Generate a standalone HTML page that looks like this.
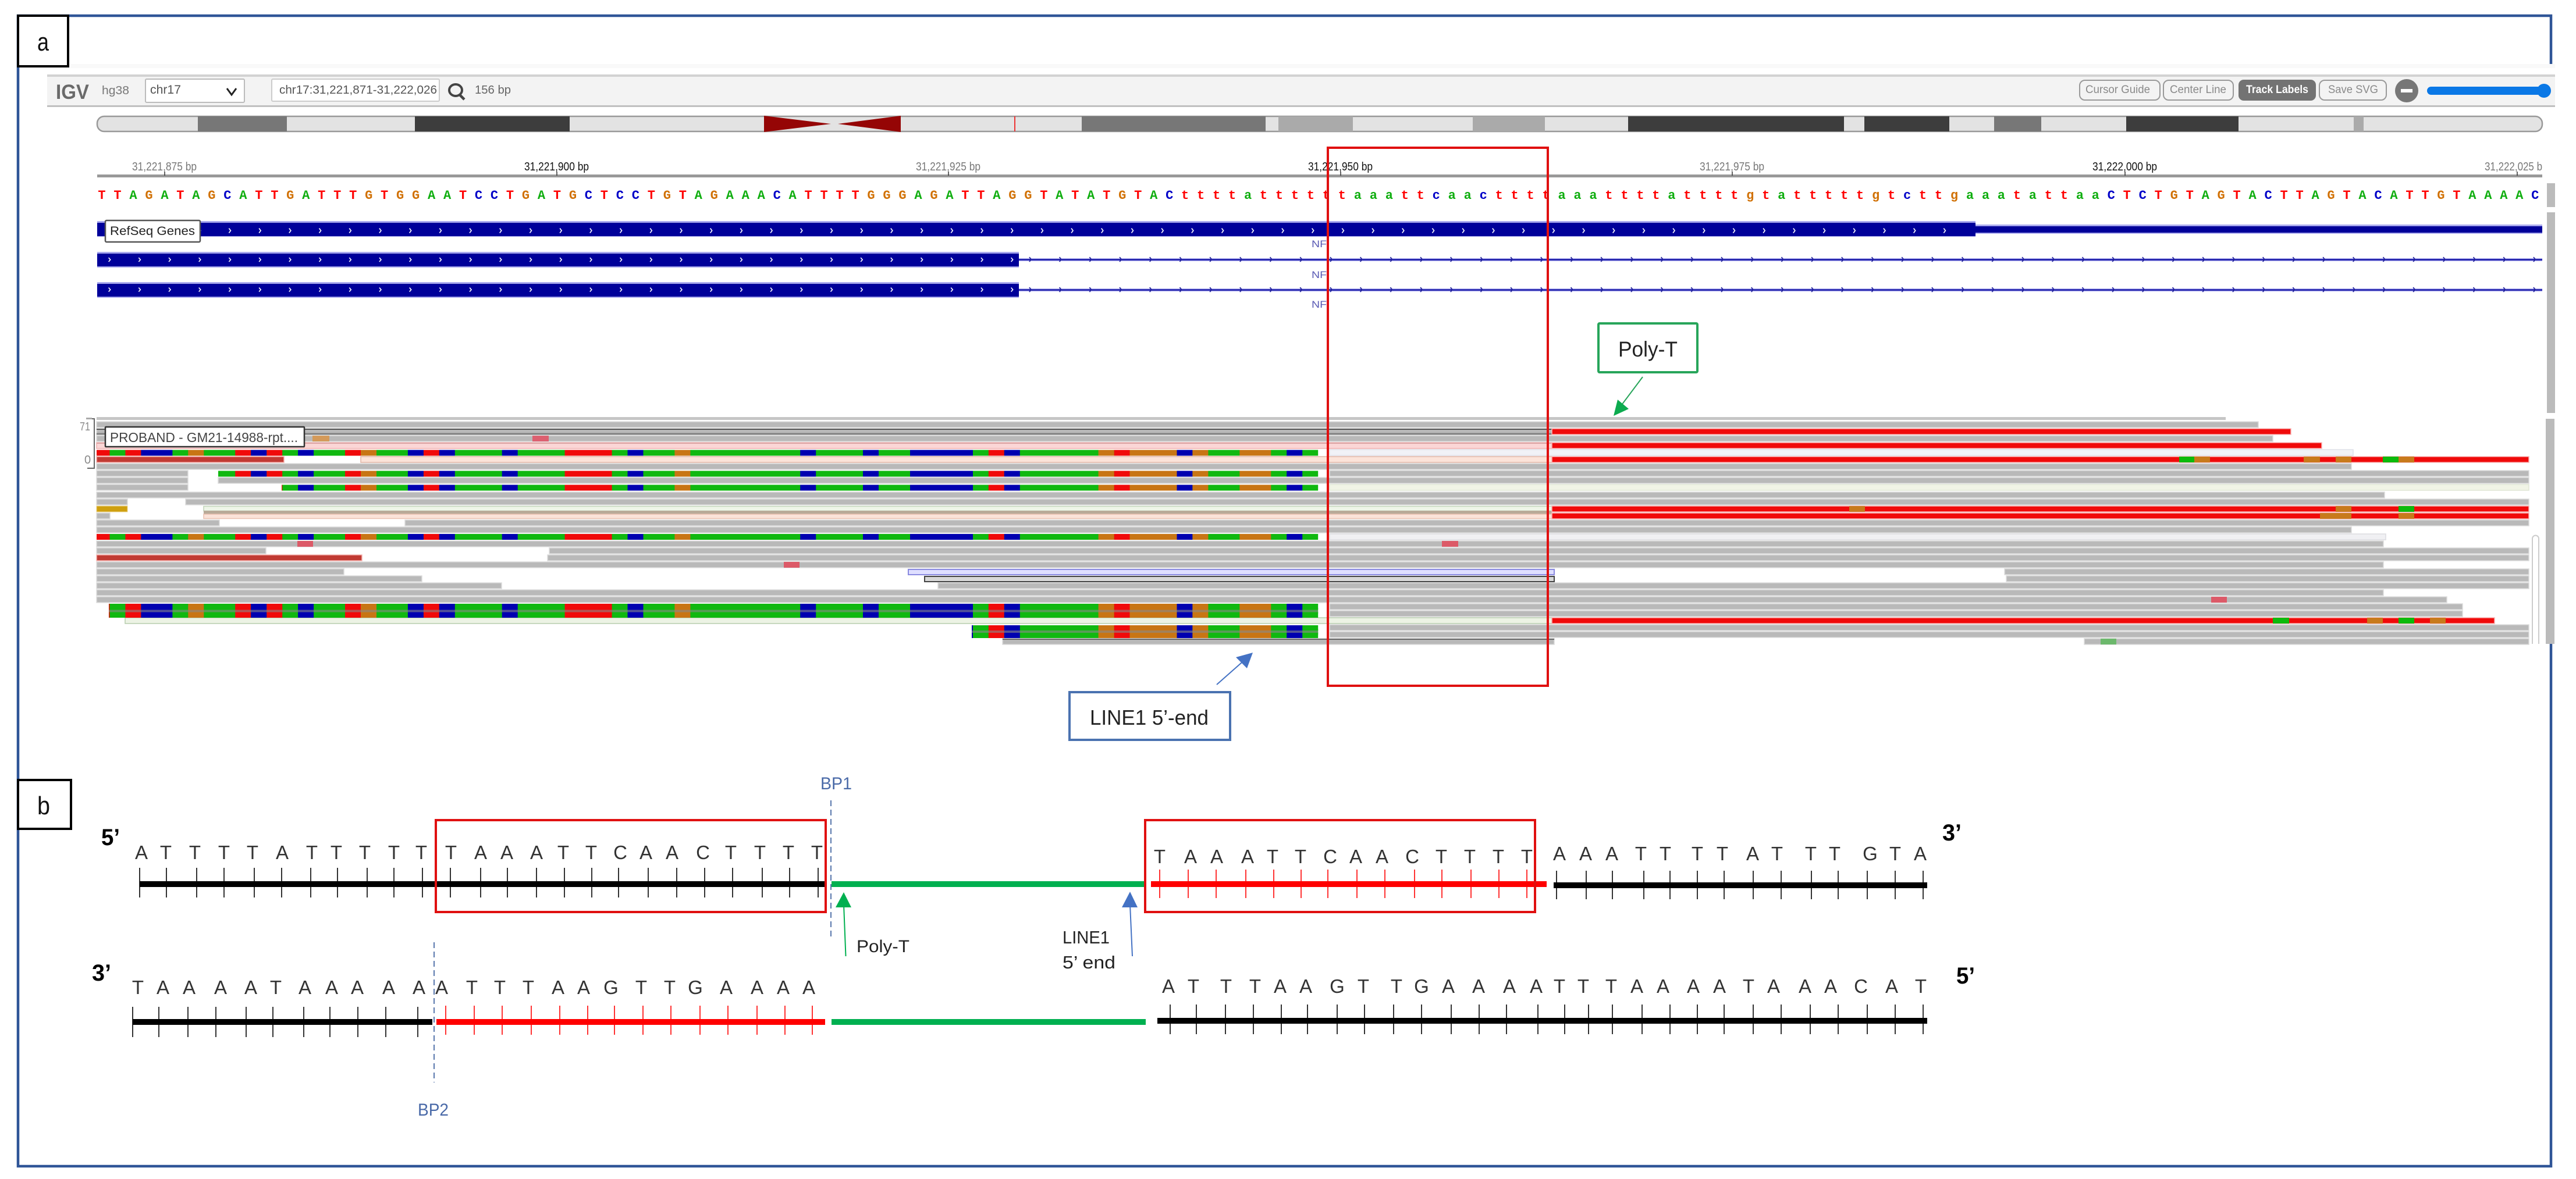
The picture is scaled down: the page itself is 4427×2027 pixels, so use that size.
<!DOCTYPE html>
<html><head><meta charset="utf-8"><style>
html,body{margin:0;padding:0;background:#fff}
svg{display:block}
text{font-family:"Liberation Sans",sans-serif}
.t{fill:#f00}.a{fill:#0fae0f}.g{fill:#d17105}.c{fill:#0000c8}
.d{font-size:33px;fill:#333;text-anchor:middle}
.b{font-size:40px;font-weight:bold;fill:#000}
</style></head><body>
<svg xmlns="http://www.w3.org/2000/svg" width="4427" height="2027" viewBox="0 0 4427 2027">
<defs>
<g id="s">
<rect x="161.5" y="0" width="2103.7" height="10" fill="#10b810"/>
<path fill="#f00a0a" d="M161.5 0h27v10h-27zM215.4 0h27v10h-27zM404.2 0h27v10h-27zM458.2 0h27v10h-27zM593 0h27v10h-27zM727.9 0h27v10h-27zM970.6 0h81v10h-81zM1698.8 0h27v10h-27zM1914.6 0h27v10h-27z"/>
<path fill="#0000b0" d="M242.4 0h54v10h-54zM431.2 0h27v10h-27zM512.1 0h27v10h-27zM700.9 0h27v10h-27zM754.8 0h27v10h-27zM862.7 0h27v10h-27zM1078.5 0h27v10h-27zM1375.2 0h27v10h-27zM1483 0h27v10h-27zM1564 0h108v10h-108zM1725.8 0h27v10h-27zM2022.4 0h27v10h-27zM2211.2 0h27v10h-27z"/>
<path fill="#c87514" d="M323.3 0h27v10h-27zM620 0h27v10h-27zM1159.4 0h27v10h-27zM1887.6 0h27v10h-27zM1941.5 0h81v10h-81zM2049.4 0h27v10h-27zM2130.3 0h54v10h-54z"/>
</g>
<clipPath id="c0"><rect x="166" y="-200" width="2110" height="1500"/></clipPath>
<clipPath id="c8"><rect x="375" y="-200" width="1900" height="1500"/></clipPath>
<clipPath id="c12"><rect x="484" y="-200" width="1790" height="1500"/></clipPath>
<clipPath id="c27"><rect x="187" y="-200" width="2090" height="1500"/></clipPath>
<clipPath id="c56"><rect x="1670" y="-200" width="600" height="1500"/></clipPath>
<pattern id="ch" x="162.15" y="0" width="51.7" height="600" patternUnits="userSpaceOnUse">
<path d="M24.5 392.5l3 4-3 4M24.5 443l3 3.5-3 3.5M24.5 494.5l3 3.5-3 3.5" fill="none" stroke="#fff" stroke-width="1.6"/>
</pattern>
<pattern id="tk" x="1745" y="0" width="51.7" height="600" patternUnits="userSpaceOnUse">
<path d="M24 442l3 4-3 4M24 494l3 4-3 4" fill="none" stroke="#22229a" stroke-width="1.8"/>
</pattern>
</defs>

<rect width="4427" height="2027" fill="#fff"/>
<rect x="31" y="27" width="4353" height="1978" fill="none" stroke="#2f5597" stroke-width="4.5"/>
<!-- IGV capture -->
<rect x="34" y="110" width="4357" height="997" fill="#fff"/>
<rect x="34" y="110" width="4357" height="7" fill="#f9f9f9"/>
<!-- toolbar -->
<rect x="81" y="128" width="4310" height="56" fill="#f3f3f3"/>
<rect x="81" y="128" width="4310" height="4" fill="#d2d2d2"/>
<rect x="81" y="181" width="4310" height="3" fill="#c0c0c0"/>
<text x="96" y="170" font-size="35" font-weight="bold" fill="#6a6a6a" textLength="57" lengthAdjust="spacingAndGlyphs">IGV</text>
<text x="175" y="162" font-size="20" fill="#777" textLength="47" lengthAdjust="spacingAndGlyphs">hg38</text>
<rect x="250" y="136" width="170" height="40" rx="2" fill="#fff" stroke="#bbb" stroke-width="2"/>
<text x="258" y="161" font-size="21" fill="#555" textLength="53" lengthAdjust="spacingAndGlyphs">chr17</text>
<path d="M390 152l8 11 8-11" fill="none" stroke="#222" stroke-width="3"/>
<rect x="467" y="136" width="288" height="38" rx="2" fill="#fff" stroke="#ccc" stroke-width="2"/>
<text x="480" y="161" font-size="20" fill="#555" textLength="271" lengthAdjust="spacingAndGlyphs">chr17:31,221,871-31,222,026</text>
<ellipse cx="783" cy="155" rx="11" ry="10" fill="none" stroke="#444" stroke-width="4"/>
<path d="M790 163l8 8" stroke="#444" stroke-width="4.5"/>
<text x="816" y="161" font-size="20" fill="#666" textLength="62" lengthAdjust="spacingAndGlyphs">156 bp</text>
<g fill="#fff" stroke="#999" stroke-width="2">
<rect x="3574" y="138" width="138" height="34" rx="9" fill="#f3f3f3"/>
<rect x="3718" y="138" width="120" height="34" rx="9" fill="#f3f3f3"/>
<rect x="3986" y="138" width="115" height="34" rx="9" fill="#f3f3f3"/>
</g>
<rect x="3847" y="137" width="133" height="36" rx="9" fill="#737373"/>
<g font-size="19">
<text x="3584" y="160" fill="#8a8a8a" textLength="111" lengthAdjust="spacingAndGlyphs">Cursor Guide</text>
<text x="3729" y="160" fill="#8a8a8a" textLength="97" lengthAdjust="spacingAndGlyphs">Center Line</text>
<text x="3860" y="160" fill="#fff" font-weight="bold" textLength="107" lengthAdjust="spacingAndGlyphs">Track Labels</text>
<text x="4001" y="160" fill="#8a8a8a" textLength="86" lengthAdjust="spacingAndGlyphs">Save SVG</text>
</g>
<circle cx="4136" cy="156" r="20" fill="#777"/>
<rect x="4126" y="153" width="20" height="6" fill="#fff"/>
<rect x="4171" y="149" width="205" height="14" rx="7" fill="#0a78e6"/>
<circle cx="4372" cy="156" r="12" fill="#0a78e6"/>
<!-- ideogram -->
<rect x="167" y="200" width="4202" height="26" rx="12" fill="#e3e3e3" stroke="#999" stroke-width="2.5"/>
<g>
<rect x="340" y="200" width="153" height="26" fill="#777"/>
<rect x="713" y="200" width="266" height="26" fill="#3d3d3d"/>
<path d="M1313 199L1428 213 1313 227zM1548 199L1440 213 1548 227z" fill="#950505"/>
<rect x="1743" y="200" width="2" height="26" fill="#e33"/>
<rect x="1859" y="200" width="316" height="26" fill="#777"/>
<rect x="2197" y="200" width="128" height="26" fill="#aaa"/>
<rect x="2531" y="200" width="124" height="26" fill="#aaa"/>
<rect x="2798" y="200" width="371" height="26" fill="#3d3d3d"/>
<rect x="3204" y="200" width="146" height="26" fill="#3d3d3d"/>
<rect x="3427" y="200" width="81" height="26" fill="#777"/>
<rect x="3654" y="200" width="193" height="26" fill="#3d3d3d"/>
<rect x="4045" y="200" width="17" height="26" fill="#aaa"/>
</g>
<!-- ruler -->
<rect x="167" y="300" width="4202" height="5" fill="#999"/>
<path d="M283 295v7M957 295v7M1630 295v7M2304 295v7M2977 295v7M3652 295v7M4326 295v7" stroke="#333" stroke-width="1.5"/>
<g font-size="20">
<text x="227" y="293" fill="#777" textLength="111" lengthAdjust="spacingAndGlyphs">31,221,875 bp</text>
<text x="901" y="293" fill="#111" textLength="111" lengthAdjust="spacingAndGlyphs">31,221,900 bp</text>
<text x="1574" y="293" fill="#777" textLength="111" lengthAdjust="spacingAndGlyphs">31,221,925 bp</text>
<text x="2248" y="293" fill="#111" textLength="111" lengthAdjust="spacingAndGlyphs">31,221,950 bp</text>
<text x="2921" y="293" fill="#777" textLength="111" lengthAdjust="spacingAndGlyphs">31,221,975 bp</text>
<text x="3596" y="293" fill="#111" textLength="111" lengthAdjust="spacingAndGlyphs">31,222,000 bp</text>
<text x="4270" y="293" fill="#777" textLength="99" lengthAdjust="spacingAndGlyphs">31,222,025 b</text>
</g>
<!-- sequence -->
<text x="168.4" y="342" font-size="22" font-weight="bold" letter-spacing="13.77" style="font-family:'Liberation Mono',monospace"><tspan class="t">TT</tspan><tspan class="a">A</tspan><tspan class="g">G</tspan><tspan class="a">A</tspan><tspan class="t">T</tspan><tspan class="a">A</tspan><tspan class="g">G</tspan><tspan class="c">C</tspan><tspan class="a">A</tspan><tspan class="t">TT</tspan><tspan class="g">G</tspan><tspan class="a">A</tspan><tspan class="t">TTT</tspan><tspan class="g">G</tspan><tspan class="t">T</tspan><tspan class="g">GG</tspan><tspan class="a">AA</tspan><tspan class="t">T</tspan><tspan class="c">CC</tspan><tspan class="t">T</tspan><tspan class="g">G</tspan><tspan class="a">A</tspan><tspan class="t">T</tspan><tspan class="g">G</tspan><tspan class="c">C</tspan><tspan class="t">T</tspan><tspan class="c">CC</tspan><tspan class="t">T</tspan><tspan class="g">G</tspan><tspan class="t">T</tspan><tspan class="a">A</tspan><tspan class="g">G</tspan><tspan class="a">AAA</tspan><tspan class="c">C</tspan><tspan class="a">A</tspan><tspan class="t">TTTT</tspan><tspan class="g">GGG</tspan><tspan class="a">A</tspan><tspan class="g">G</tspan><tspan class="a">A</tspan><tspan class="t">TT</tspan><tspan class="a">A</tspan><tspan class="g">GG</tspan><tspan class="t">T</tspan><tspan class="a">A</tspan><tspan class="t">T</tspan><tspan class="a">A</tspan><tspan class="t">T</tspan><tspan class="g">G</tspan><tspan class="t">T</tspan><tspan class="a">A</tspan><tspan class="c">C</tspan><tspan class="t">tttt</tspan><tspan class="a">a</tspan><tspan class="t">tttttt</tspan><tspan class="a">aaa</tspan><tspan class="t">tt</tspan><tspan class="c">c</tspan><tspan class="a">aa</tspan><tspan class="c">c</tspan><tspan class="t">tttt</tspan><tspan class="a">aaa</tspan><tspan class="t">tttt</tspan><tspan class="a">a</tspan><tspan class="t">tttt</tspan><tspan class="g">g</tspan><tspan class="t">t</tspan><tspan class="a">a</tspan><tspan class="t">ttttt</tspan><tspan class="g">g</tspan><tspan class="t">t</tspan><tspan class="c">c</tspan><tspan class="t">tt</tspan><tspan class="g">g</tspan><tspan class="a">aaa</tspan><tspan class="t">t</tspan><tspan class="a">a</tspan><tspan class="t">tt</tspan><tspan class="a">aa</tspan><tspan class="c">C</tspan><tspan class="t">T</tspan><tspan class="c">C</tspan><tspan class="t">T</tspan><tspan class="g">G</tspan><tspan class="t">T</tspan><tspan class="a">A</tspan><tspan class="g">G</tspan><tspan class="t">T</tspan><tspan class="a">A</tspan><tspan class="c">C</tspan><tspan class="t">TT</tspan><tspan class="a">A</tspan><tspan class="g">G</tspan><tspan class="t">T</tspan><tspan class="a">A</tspan><tspan class="c">C</tspan><tspan class="a">A</tspan><tspan class="t">TT</tspan><tspan class="g">G</tspan><tspan class="t">T</tspan><tspan class="a">AAAA</tspan><tspan class="c">C</tspan></text>
<!-- gene tracks -->
<g fill="#a9a9ee">
<rect x="167" y="380" width="3228" height="27"/>
<rect x="3395" y="386" width="974" height="16"/>
<rect x="167" y="433" width="1584" height="27"/>
<rect x="167" y="485" width="1584" height="27"/>
<rect x="1751" y="444" width="2618" height="5"/>
<rect x="1751" y="496" width="2618" height="5"/>
</g>
<g fill="#00009a">
<rect x="167" y="383" width="3228" height="23"/>
<rect x="3395" y="389" width="974" height="11"/>
<rect x="167" y="436" width="1584" height="22"/>
<rect x="167" y="488" width="1584" height="22"/>
<rect x="1751" y="445.5" width="2618" height="2"/>
<rect x="1751" y="497.5" width="2618" height="2"/>
</g>
<rect x="167" y="383" width="3190" height="23" fill="url(#ch)"/>
<rect x="167" y="436" width="1584" height="22" fill="url(#ch)"/>
<rect x="167" y="488" width="1584" height="22" fill="url(#ch)"/>
<rect x="1751" y="440" width="2618" height="12" fill="url(#tk)"/>
<rect x="1751" y="492" width="2618" height="12" fill="url(#tk)"/>
<g font-size="17" fill="#5a5ab4">
<text x="2254" y="425" textLength="26" lengthAdjust="spacingAndGlyphs">NF</text>
<text x="2254" y="478" textLength="26" lengthAdjust="spacingAndGlyphs">NF</text>
<text x="2254" y="529" textLength="26" lengthAdjust="spacingAndGlyphs">NF</text>
</g>
<rect x="181" y="379" width="163" height="37" rx="2" fill="#fff" stroke="#555" stroke-width="2.5"/>
<text x="189" y="404" font-size="21" fill="#222" textLength="146" lengthAdjust="spacingAndGlyphs">RefSeq Genes</text>
<!-- reads -->
<rect x="166" y="717" width="3659" height="5" fill="#c6c6c6"/>
<g fill="#b9b9b9" stroke="#dcdcdc" stroke-width="1.5">
<path d="M166 725H3881v10H166zM166 737H2667v10H166zM166 749H3906v10H166zM166 797H4041v10H166zM166 809H323v10H166zM2285 809H4346v10H2285zM166 821H323v10H166zM375 821H4346v10H375zM166 833H323v10H166zM166 846H4098v10H166zM166 858H219v10H166zM319 858H4346v10H319zM166 882H189v10H166zM166 894H377v10H166zM696 894H4346v10H696zM166 906H4041v10H166zM166 930H4096v10H166zM166 942H457v10H166zM944 942H4346v10H944zM941 954H4346v10H941zM166 966H4096v10H166zM166 978H591v10H166zM3445 978H4346v10H3445zM166 990H725v10H166zM3448 990H4346v10H3448zM166 1002H862v10H166zM1612 1002H4346v10H1612zM166 1014H4096v10H166zM166 1026H4205v10H166zM2285 1038H4232v10H2285zM2285 1050H4232v10H2285zM2285 1074H4346v10H2285zM2285 1086H4346v10H2285zM1723 1098H2671v10H1723zM3582 1098H4346v10H3582z"/>
</g>
<!-- dark lines -->
<rect x="166" y="737" width="2501" height="2" fill="#555"/>
<rect x="166" y="744.5" width="2501" height="3" fill="#808080"/>
<!-- pale rows -->
<rect x="166" y="761" width="2501" height="10" fill="#fbd6d6" stroke="#f0b0b0" stroke-width="1.5"/>
<rect x="166" y="761" width="2501" height="2" fill="#dca5a5"/>
<rect x="620" y="785" width="2047" height="10" fill="#fbe3d9" stroke="#e0b5a5" stroke-width="1.5"/>
<rect x="350" y="870.5" width="2317" height="8" fill="#eef5e8" stroke="#c0d4b8" stroke-width="1.5"/>
<rect x="350" y="878" width="2317" height="6" fill="#b9aa98"/>
<rect x="350" y="884" width="2317" height="7.5" fill="#fbe3d9" stroke="#e9c0b0" stroke-width="1.5"/>
<rect x="215" y="1062" width="2452" height="10" fill="#ecf3e4" stroke="#b7cdae" stroke-width="1.5"/>
<rect x="2285" y="773" width="1759" height="10" fill="#f1f2f7" stroke="#dfe1e8" stroke-width="1.5"/>
<rect x="2285" y="833" width="2061" height="10" fill="#f1f4e6" stroke="#e1e6d6" stroke-width="1.5"/>
<rect x="2285" y="918" width="1815" height="10" fill="#f0f0f3" stroke="#dcdce0" stroke-width="1.5"/>
<rect x="1561" y="979" width="1110" height="9" fill="#dfdfff" stroke="#8a8ae0" stroke-width="2"/>
<rect x="1589" y="991" width="1082" height="9" fill="#d8d8d8" stroke="#444" stroke-width="2"/>
<rect x="1723" y="1098" width="948" height="2" fill="#666"/>
<!-- red rows -->
<g fill="#c13a33" stroke="#f6b4b0" stroke-width="1.5">
<path d="M166 785H488v10H166zM166 954H622v10H166z"/>
</g>
<rect x="166" y="870" width="53" height="10" fill="#cfa010" stroke="#e8cf80" stroke-width="1"/>
<g fill="#f00a0a" stroke="#f9b4b4" stroke-width="1.5">
<path d="M2667 737H3937v10H2667zM2667 761H3990v10H2667zM2667 785H4346v10H2667zM2667 870H4346v10H2667zM2667 882H4346v10H2667zM2667 1062H4287v10H2667z"/>
</g>
<!-- mismatches -->
<g fill="#c87a1c">
<path d="M3771 785h27v10h-27zM3959 785h28v10h-28zM4014 785h27v10h-27zM4122 785h27v10h-27zM3178 870h27v10h-27zM4014 870h27v10h-27zM3987 882h54v10h-54zM4122 882h27v10h-27zM4068 1062h27v10h-27zM4176 1062h27v10h-27z"/>
</g>
<g fill="#0cba0c">
<path d="M3745 785h26v10h-26zM4095 785h27v10h-27zM4122 870h27v10h-27zM3906 1062h28v10h-28zM4122 1062h27v10h-27z"/>
</g>
<rect x="537" y="749" width="29" height="10" fill="#d49a5a"/>
<rect x="915" y="749" width="28" height="10" fill="#dd6070"/>
<path d="M511 930h27v10h-27zM2478 930h28v10h-28zM1347 966h27v10h-27zM3800 1026h27v10h-27z" fill="#dc5a68"/>
<rect x="3610" y="1098" width="27" height="10" fill="#6cb86c"/>
<!-- coloured reads -->
<use href="#s" y="773.5" clip-path="url(#c0)"/>
<use href="#s" y="809.5" clip-path="url(#c8)"/>
<use href="#s" y="833.5" clip-path="url(#c12)"/>
<use href="#s" y="918" clip-path="url(#c0)"/>
<use href="#s" y="1038" clip-path="url(#c27)"/>
<use href="#s" y="1045" clip-path="url(#c27)"/>
<use href="#s" y="1052" clip-path="url(#c27)"/>
<rect x="187" y="1048.5" width="2078" height="4" fill="#888" opacity=".6"/>
<use href="#s" y="1075" clip-path="url(#c56)"/>
<use href="#s" y="1081" clip-path="url(#c56)"/>
<use href="#s" y="1087" clip-path="url(#c56)"/>
<rect x="1670" y="1084" width="595" height="4" fill="#888" opacity=".6"/>
<!-- axis and label -->
<path d="M150 720h12v85h-12" fill="none" stroke="#666" stroke-width="2"/>
<rect x="148" y="718" width="10" height="3" fill="#aaa"/>
<text x="137" y="740" font-size="20" fill="#8a8a8a" textLength="18" lengthAdjust="spacingAndGlyphs">71</text>
<text x="145" y="797" font-size="20" fill="#8a8a8a">0</text>
<rect x="181" y="734" width="342" height="34" rx="1" fill="#fff" stroke="#333" stroke-width="2.5"/>
<text x="189" y="760" font-size="23" fill="#444" textLength="323" lengthAdjust="spacingAndGlyphs">PROBAND - GM21-14988-rpt....</text>
<!-- scrollbars -->
<rect x="4377" y="315" width="14" height="41" fill="#bbb"/>
<rect x="4377" y="365" width="14" height="345" fill="#bbb"/>
<rect x="4375" y="720" width="15" height="387" fill="#bbb"/>
<path d="M4352 1107V926a5.5 5.5 0 0 1 11 0v181" fill="#fff" stroke="#ccc" stroke-width="2"/>
<!-- red box a -->
<rect x="2282" y="254" width="378" height="925" fill="none" stroke="#e01010" stroke-width="4"/>
<!-- a label -->
<rect x="31" y="27" width="86" height="87" fill="#fff" stroke="#000" stroke-width="4"/>
<text x="64" y="87" font-size="44" fill="#111" textLength="20" lengthAdjust="spacingAndGlyphs">a</text>
<!-- callouts -->
<rect x="2747" y="556" width="170" height="84" rx="2" fill="#fff" stroke="#27a55a" stroke-width="4"/>
<text x="2781" y="613" font-size="37" fill="#222" textLength="102" lengthAdjust="spacingAndGlyphs">Poly-T</text>
<path d="M2823 648L2787 696" stroke="#27a55a" stroke-width="2"/>
<path d="M2773 715L2780 687 2799 703z" fill="#0cab4f"/>
<rect x="1838" y="1190" width="276" height="82" fill="#fff" stroke="#4a72b0" stroke-width="4"/>
<text x="1873" y="1246" font-size="36" fill="#222" textLength="204" lengthAdjust="spacingAndGlyphs">LINE1 5’-end</text>
<path d="M2091 1177L2134 1139" stroke="#4472c4" stroke-width="2"/>
<path d="M2153 1122L2124 1130 2143 1149z" fill="#4472c4"/>

<!-- panel b -->
<rect x="31" y="1341" width="91" height="84" fill="#fff" stroke="#000" stroke-width="4"/>
<text x="64" y="1400" font-size="44" fill="#111" textLength="22" lengthAdjust="spacingAndGlyphs">b</text>
<text x="174" y="1453" class="b" textLength="32" lengthAdjust="spacingAndGlyphs">5’</text>
<text x="3338" y="1445" class="b" textLength="33" lengthAdjust="spacingAndGlyphs">3’</text>
<text x="158" y="1686" class="b" textLength="33" lengthAdjust="spacingAndGlyphs">3’</text>
<text x="3362" y="1691" class="b" textLength="32" lengthAdjust="spacingAndGlyphs">5’</text>
<!-- bars -->
<rect x="240" y="1515" width="1179" height="10" fill="#000"/>
<rect x="1429" y="1515" width="538" height="10" fill="#00b050"/>
<rect x="1978" y="1515" width="680" height="10" fill="#f00"/>
<rect x="2670" y="1517" width="642" height="10" fill="#000"/>
<rect x="228" y="1752" width="515" height="10" fill="#000"/>
<rect x="750" y="1752" width="668" height="10" fill="#f00"/>
<rect x="1429" y="1752" width="540" height="10" fill="#00b050"/>
<rect x="1989" y="1750" width="1323" height="10" fill="#000"/>
<!-- ticks -->
<path stroke="#000" stroke-width="1.6" d="M240 1492v51M286 1492v51M338 1492v51M385 1492v51M437 1492v51M484 1492v51M534 1492v51M580 1492v51M631 1492v51M677 1492v51M726 1492v51M774 1492v51M826 1492v51M872 1492v51M922 1492v51M970 1492v51M1017 1492v51M1063 1492v51M1114 1492v51M1163 1492v51M1211 1492v51M1259 1492v51M1310 1492v51M1357 1492v51M1406 1492v51"/>
<path stroke="#f00" stroke-width="1.6" d="M1993 1495v49M2042 1495v49M2090 1495v49M2141 1495v49M2189 1495v49M2236 1495v49M2282 1495v49M2332 1495v49M2380 1495v49M2431 1495v49M2478 1495v49M2528 1495v49M2576 1495v49M2624 1495v49"/>
<path stroke="#000" stroke-width="1.6" d="M2675 1497v49M2726 1497v49M2771 1497v49M2825 1497v49M2870 1497v49M2917 1497v49M2963 1497v49M3013 1497v49M3061 1497v49M3113 1497v49M3159 1497v49M3209 1497v49M3257 1497v49M3305 1497v49"/>
<path stroke="#000" stroke-width="1.6" d="M228 1731v52M273 1731v52M323 1731v52M371 1731v52M423 1731v52M469 1731v52M522 1731v52M567 1731v52M615 1731v52M663 1731v52M718 1731v52"/>
<path stroke="#f00" stroke-width="1.6" d="M766 1729v50M815 1729v50M863 1729v50M913 1729v50M962 1729v50M1010 1729v50M1056 1729v50M1105 1729v50M1153 1729v50M1203 1729v50M1251 1729v50M1301 1729v50M1349 1729v50M1396 1729v50"/>
<path stroke="#000" stroke-width="1.6" d="M2011 1727v51M2056 1727v51M2106 1727v51M2154 1727v51M2202 1727v51M2247 1727v51M2298 1727v51M2345 1727v51M2395 1727v51M2443 1727v51M2494 1727v51M2542 1727v51M2589 1727v51M2643 1727v51M2689 1727v51M2730 1727v51M2771 1727v51M2822 1727v51M2870 1727v51M2917 1727v51M2963 1727v51M3013 1727v51M3061 1727v51M3111 1727v51M3159 1727v51M3209 1727v51M3257 1727v51M3305 1727v51"/>
<!-- red boxes -->
<rect x="749" y="1410" width="670" height="158" fill="none" stroke="#e01010" stroke-width="4"/>
<rect x="1968" y="1410" width="670" height="158" fill="none" stroke="#e01010" stroke-width="4"/>
<!-- letters -->
<text class="d" y="1477" x="243 285 335 385 434 485 536 578 627 677 724 775 826 871 922 968 1016 1066 1110 1155 1208 1256 1306 1355 1404">ATTTTATTTTTTAAATTCAACTTTT</text>
<text class="d" y="1484" x="1993 2046 2091 2144 2187 2235 2286 2330 2375 2427 2477 2526 2575 2624">TAAATTCAACTTTT</text>
<text class="d" y="1479" x="2680 2725 2770 2820 2862 2917 2960 3012 3054 3112 3153 3214 3257 3300">AAATTTTATTTGTA</text>
<text class="d" y="1709" x="237 280 325 379 431 474 524 570 614 668 720 759 811 859 908 959 1003 1050 1102 1151 1195 1248 1301 1346 1390">TAAAATAAAAAATTTAAGTTGAAAA</text>
<text class="d" y="1707" x="2008 2051 2107 2157 2200 2244 2298 2343 2400 2443 2489 2541 2594 2640 2680 2721 2769 2813 2858 2910 2955 3005 3048 3102 3146 3198 3251 3301">ATTTAAGTTGAAAATTTAAAATAAACAT</text>
<!-- BP lines -->
<path d="M1428 1376V1615" stroke="#2f5597" stroke-width="1.6" stroke-dasharray="10 6" fill="none"/>
<path d="M746 1620V1861" stroke="#2f5597" stroke-width="1.6" stroke-dasharray="10 6" fill="none"/>
<text x="1410" y="1357" font-size="30" fill="#4a6aa8" textLength="54" lengthAdjust="spacingAndGlyphs">BP1</text>
<text x="718" y="1918" font-size="30" fill="#4a6aa8" textLength="53" lengthAdjust="spacingAndGlyphs">BP2</text>
<!-- arrows -->
<path d="M1453.5 1644L1450 1555" stroke="#00b050" stroke-width="2"/>
<path d="M1450 1534L1436 1560 1463 1560z" fill="#00b050"/>
<path d="M1946 1644L1942 1555" stroke="#4472c4" stroke-width="2"/>
<path d="M1942 1533L1928 1560 1955 1560z" fill="#4472c4"/>
<text x="1472" y="1637" font-size="30" fill="#222" textLength="91" lengthAdjust="spacingAndGlyphs">Poly-T</text>
<text x="1826" y="1622" font-size="31" fill="#222" textLength="81" lengthAdjust="spacingAndGlyphs">LINE1</text>
<text x="1826" y="1665" font-size="31" fill="#222" textLength="91" lengthAdjust="spacingAndGlyphs">5’ end</text>
</svg>
</body></html>
